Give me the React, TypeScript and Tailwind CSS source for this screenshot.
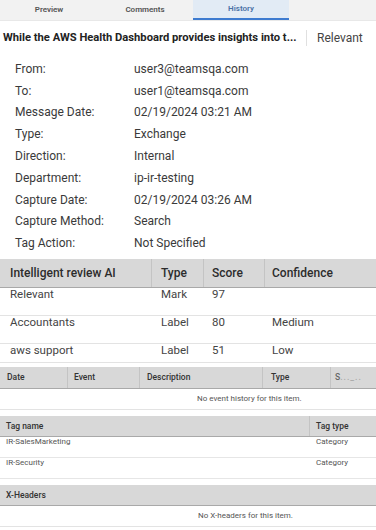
const fields: [string, string][] = [
  ["From:", "user3@teamsqa.com"],
  ["To:", "user1@teamsqa.com"],
  ["Message Date:", "02/19/2024 03:21 AM"],
  ["Type:", "Exchange"],
  ["Direction:", "Internal"],
  ["Department:", "ip-ir-testing"],
  ["Capture Date:", "02/19/2024 03:26 AM"],
  ["Capture Method:", "Search"],
  ["Tag Action:", "Not Specified"],
];

const aiRows = [
  { name: "Relevant", type: "Mark", score: "97", conf: "", h: "h-[28px]" },
  { name: "Accountants", type: "Label", score: "80", conf: "Medium", h: "h-[28px]" },
  { name: "aws support", type: "Label", score: "51", conf: "Low", h: "h-[19px]" },
];

const tags = ["IR-SalesMarketing", "IR-Security"];

function Tabs() {
  const tabs = ["Preview", "Comments", "History"];
  return (
    <div className="flex h-[21px] bg-[#f2f2f2] pl-[1px] border-b border-[#e8e8e8]">
      {tabs.map((t) => {
        const active = t === "History";
        return (
          <div
            key={t}
            className={
              active
                ? "w-[96px] h-[20px] flex items-center justify-center text-[8px] font-semibold text-[#4a72a6] bg-[#e2ebf5] border-b-2 border-[#3d7bd0]"
                : "w-[96px] h-[20px] flex items-center justify-center text-[8px] font-semibold text-[#555]"
            }
          >
            {t}
          </div>
        );
      })}
    </div>
  );
}

export default function App() {
  return (
    <div className="w-[376px] h-[530px] overflow-hidden bg-white text-[#333]" style={{ fontFamily: "Roboto, 'Liberation Sans', sans-serif" }}>
      <Tabs />

      <div className="flex items-center h-[22px] mt-[6px]">
        <div className="w-[306px] pl-[3px] text-[11.2px] font-bold text-[#222] whitespace-nowrap">
          While the AWS Health Dashboard provides insights into t...
        </div>
        <div className="w-px h-[16px] bg-[#e0e0e0]" />
        <div className="pl-[10px] text-[12px] text-[#444]">Relevant</div>
      </div>

      <div className="mt-[9px] pl-[15px]">
        {fields.map(([k, v]) => (
          <div key={k} className="flex h-[21.8px] items-center text-[12px] text-[#3a3a3a]">
            <div className="w-[119px]">{k}</div>
            <div>{v}</div>
          </div>
        ))}
      </div>

      {/* Intelligent review AI */}
      <div className="mt-[5px]">
        <div className="flex h-[29px] bg-[#d8d8d8] border-b border-[#a9a9a9] text-[12px] font-medium text-[#2c2c2c]">
          <div className="w-[152px] pl-[10px] flex items-center border-r border-[#c4c4c4]">Intelligent review AI</div>
          <div className="w-[52px] pl-[9px] flex items-center border-r border-[#c4c4c4]">Type</div>
          <div className="w-[61px] pl-[8px] flex items-center border-r border-[#c4c4c4]">Score</div>
          <div className="flex-1 pl-[7px] flex items-center">Confidence</div>
        </div>
        {aiRows.map((r) => (
          <div key={r.name} className={`flex ${r.h} border-b border-[#e3e3e3] text-[11.5px] text-[#444] leading-[12px]`}>
            <div className="w-[152px] pl-[10px]">{r.name}</div>
            <div className="w-[52px] pl-[9px]">{r.type}</div>
            <div className="w-[61px] pl-[8px]">{r.score}</div>
            <div className="flex-1 pl-[7px]">{r.conf}</div>
          </div>
        ))}
      </div>

      {/* Event history */}
      <div className="mt-[4px]">
        <div className="flex h-[22px] bg-[#d8d8d8] border-b border-[#a9a9a9] text-[8.5px] font-medium text-[#333]">
          <div className="w-[68px] pl-[7px] flex items-center border-r border-[#c4c4c4]">Date</div>
          <div className="w-[72px] pl-[6px] flex items-center border-r border-[#c4c4c4]">Event</div>
          <div className="w-[123px] pl-[7px] flex items-center border-r border-[#c4c4c4]">Description</div>
          <div className="w-[68px] pl-[8px] flex items-center border-r border-[#c4c4c4]">Type</div>
          <div className="flex-1 pl-[4px] flex items-center text-[#666]">S<span className="tracking-[1px] text-[#aaa]">..._..</span></div>
        </div>
        <div className="h-[21px] flex items-center pl-[197px] text-[8px] text-[#555] border-b border-[#e3e3e3]">
          No event history for this item.
        </div>
      </div>

      {/* Tags */}
      <div className="mt-[6px]">
        <div className="flex h-[21px] bg-[#d8d8d8] border-b border-[#a9a9a9] text-[8.5px] font-medium text-[#333]">
          <div className="w-[310px] pl-[6px] flex items-center border-r border-[#c4c4c4]">Tag name</div>
          <div className="flex-1 pl-[6px] flex items-center">Tag type</div>
        </div>
        {tags.map((t) => (
          <div key={t} className="flex h-[21px] border-b border-[#e6e6e6] text-[8px] text-[#555] leading-[10px]">
            <div className="w-[310px] pl-[6px]">{t}</div>
            <div className="flex-1 pl-[6px]">Category</div>
          </div>
        ))}
      </div>

      {/* X-Headers */}
      <div className="mt-[6px]">
        <div className="flex h-[21px] items-center pl-[6px] bg-[#d8d8d8] border-b border-[#a9a9a9] text-[8.5px] font-medium text-[#333]">
          X-Headers
        </div>
        <div className="h-[21px] flex items-center pl-[198px] text-[8px] text-[#555] border-b border-[#e3e3e3]">
          No X-headers for this item.
        </div>
      </div>
    </div>
  );
}
